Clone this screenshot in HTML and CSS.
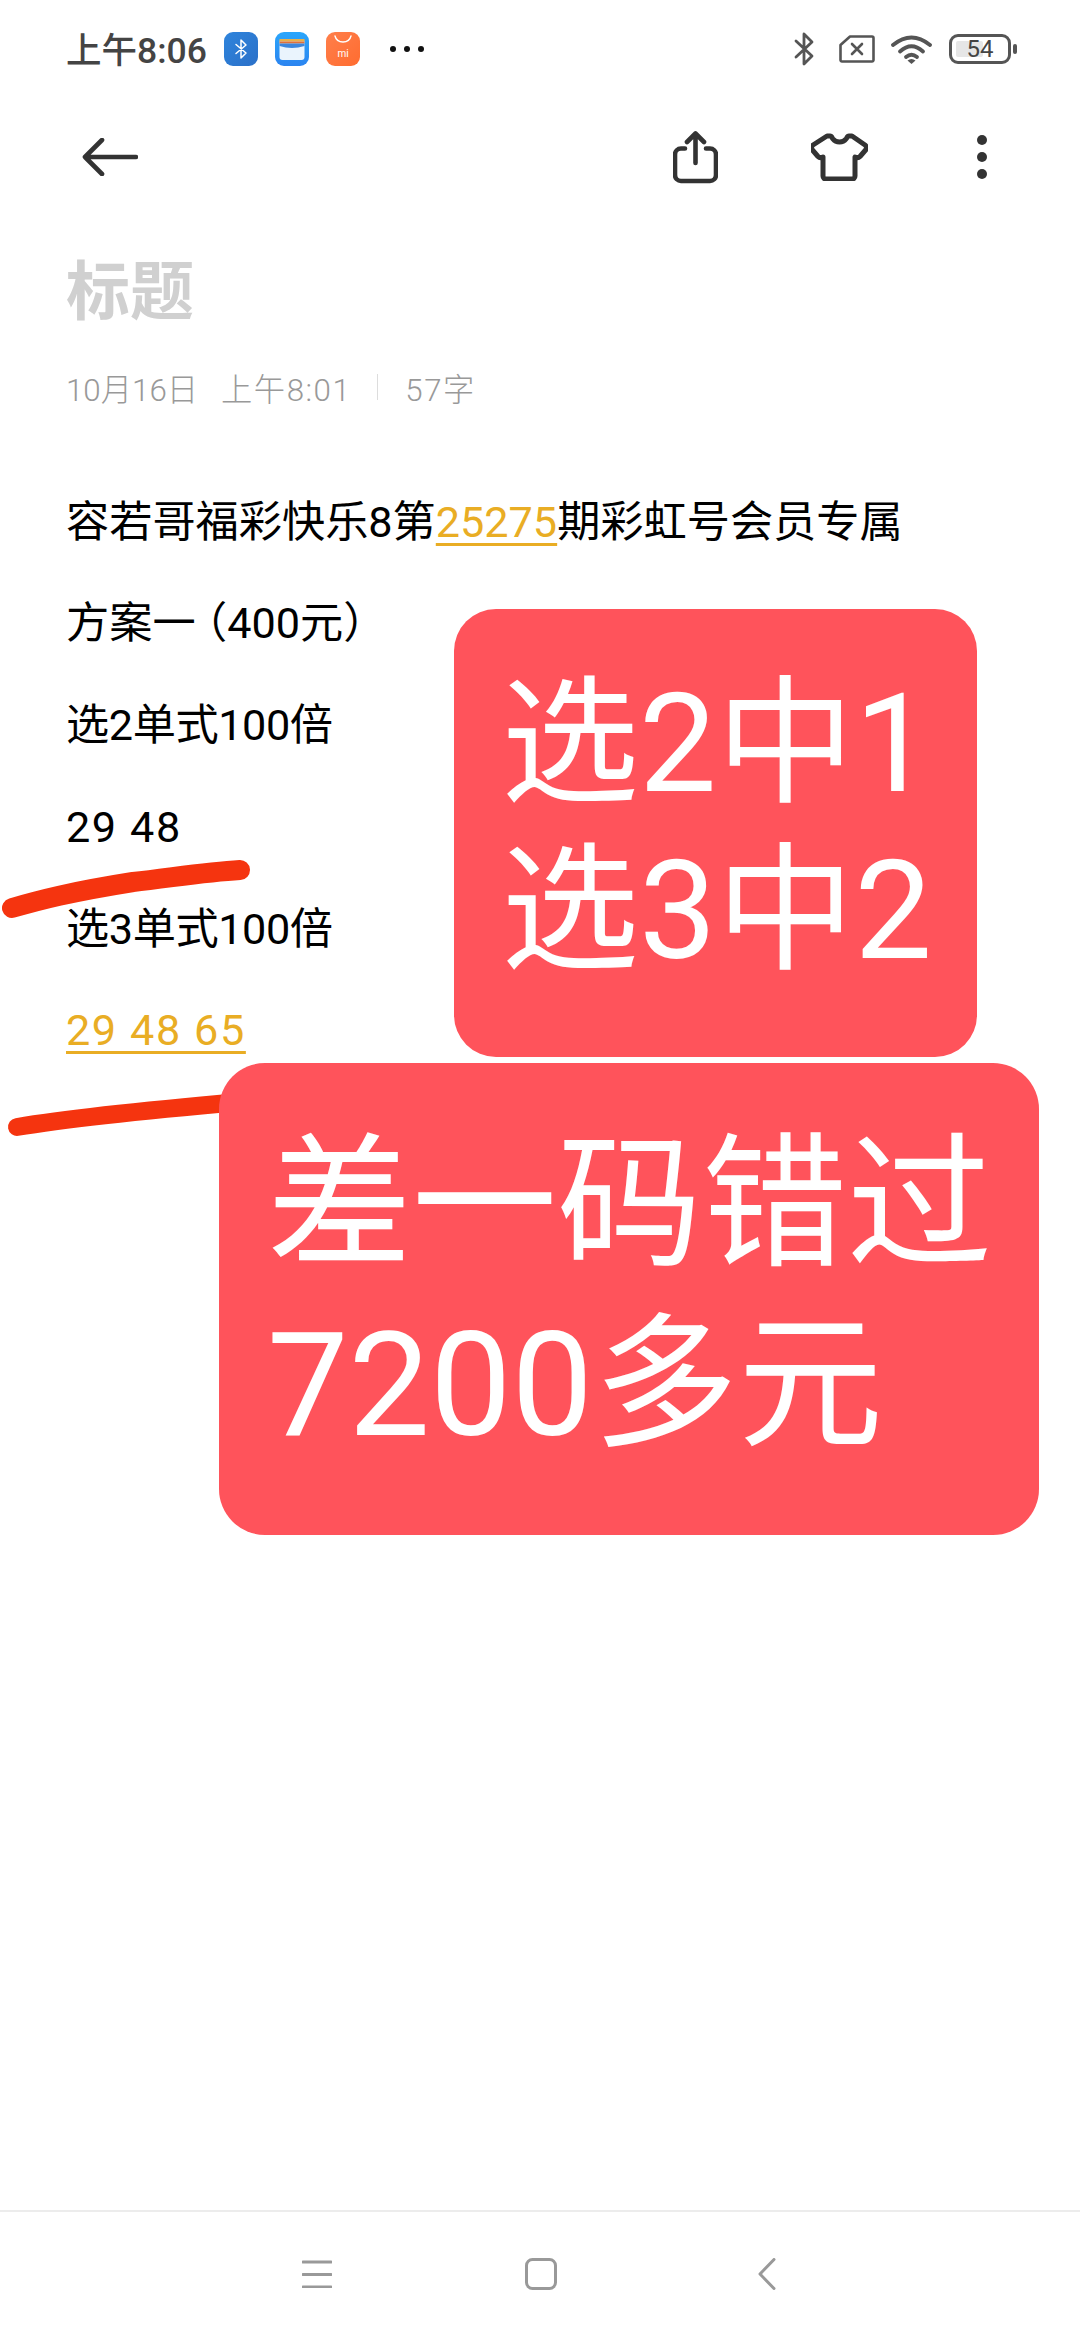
FILE: index.html
```html
<!DOCTYPE html>
<html lang="zh-CN">
<head>
    <meta charset="UTF-8">
    <meta name="viewport" content="width=device-width, initial-scale=1.0">
    <title>标题</title>
    <link rel="stylesheet" href="styles.css">
</head>

<body>
<div class="page">
    <!-- status bar -->
    <div class="status-bar">
        <span class="clock">上午8:06</span>
        <div class="app-icons">
            <svg class="app-icon" viewBox="0 0 34 34">
                <defs>
                    <linearGradient id="bt-bg" x1="0" y1="0" x2="1" y2="1"><stop offset="0" stop-color="#2e84dc"/><stop offset="1" stop-color="#2b70c8"/></linearGradient>
                    <linearGradient id="wallet-bg" x1="0" y1="0" x2="0" y2="1"><stop offset="0" stop-color="#2aa6fb"/><stop offset="1" stop-color="#2b84f0"/></linearGradient>
                    <linearGradient id="shop-bg" x1="0" y1="0" x2="1" y2="1"><stop offset="0" stop-color="#ff7f4b"/><stop offset="1" stop-color="#ff6c30"/></linearGradient>
                </defs>
                <rect width="34" height="34" rx="9" fill="url(#bt-bg)"/>
                <path d="M12 12.5 L22 21 L17 26 V8 L22 13 L12 21.5" fill="none" stroke="#fff" stroke-width="1.5" stroke-linecap="round" stroke-linejoin="round"/>
            </svg>
            <svg class="app-icon" viewBox="0 0 34 34">
                <rect width="34" height="34" rx="9" fill="url(#wallet-bg)"/>
                <rect x="4.5" y="7" width="25" height="21" rx="3" fill="#eaf4fd"/>
                <rect x="4.5" y="7" width="25" height="2.5" fill="#e8b04a"/>
                <rect x="4.5" y="9.5" width="25" height="2" fill="#e0703a"/>
                <path d="M4.5 11.5 H29.5 V14 Q17 18 4.5 14 Z" fill="#3c86dc"/>
            </svg>
            <svg class="app-icon" viewBox="0 0 34 34">
                <rect width="34" height="34" rx="9" fill="url(#shop-bg)"/>
                <path d="M9 4 C11 12 23 12 25 4" fill="none" stroke="#fff" stroke-width="1.4" stroke-linecap="round"/>
                <text class="mi-mark" x="17" y="24.5" text-anchor="middle">mi</text>
            </svg>
        </div>
        <div class="more-dots"><i></i><i></i><i></i></div>

        <div class="status-right">
            <svg class="st-bt" viewBox="0 0 20 34">
                <path d="M2 9 L18 24 L10 32 V2 L18 10 L2 25" fill="none" stroke="#555" stroke-width="2.8" stroke-linecap="round" stroke-linejoin="round"/>
            </svg>
            <svg class="st-sim" viewBox="0 0 36 28">
                <path d="M11 1.5 H33 a1.5 1.5 0 0 1 1.5 1.5 V25 a1.5 1.5 0 0 1 -1.5 1.5 H3 a1.5 1.5 0 0 1 -1.5 -1.5 V10 Z" fill="none" stroke="#555" stroke-width="2.6" stroke-linejoin="round"/>
                <path d="M13 9 L23 19 M23 9 L13 19" stroke="#555" stroke-width="2.6" stroke-linecap="round"/>
            </svg>
            <svg class="st-wifi" viewBox="0 0 41 29">
                <g fill="none" stroke="#555" stroke-width="3.8" stroke-linecap="round">
                    <path d="M2 10 Q20.5 -5 39 10"/>
                    <path d="M9 16.5 Q20.5 6 32 16.5"/>
                    <path d="M15 22 Q20.5 17.5 26 22"/>
                </g>
                <path d="M20.5 29 L16.5 25.5 Q20.5 22.5 24.5 25.5 Z" fill="#555"/>
            </svg>
            <div class="battery">
                <div class="battery-fill"></div>
                <span class="battery-num">54</span>
            </div>
            <div class="battery-nub"></div>
        </div>
    </div>

    <!-- top toolbar -->
    <div class="toolbar">
        <svg class="tb-back" viewBox="0 0 56 38">
            <path d="M54 19 H3 M20 2 L3 19 L20 36" fill="none" stroke="#333" stroke-width="4.6" stroke-linecap="round" stroke-linejoin="round"/>
        </svg>
        <div class="toolbar-right">
            <svg class="tb-share" viewBox="0 0 45 53">
                <path d="M12 17.5 H8 a6 6 0 0 0 -6 6 V44 a6 6 0 0 0 6 6 H37 a6 6 0 0 0 6 -6 V23.5 a6 6 0 0 0 -6 -6 H33" fill="none" stroke="#333" stroke-width="4.6" stroke-linecap="round"/>
                <path d="M22.5 32 V3 M14 11 L22.5 2.5 L31 11" fill="none" stroke="#333" stroke-width="4.6" stroke-linecap="round" stroke-linejoin="round"/>
            </svg>
            <svg class="tb-shirt" viewBox="0 0 57 48">
                <path d="M16 3 h3 c2 0 2 2 3 3 c3 4 10 4 13 0 c1 -1 1 -3 3 -3 h3 l13 9 c2 1.5 2 3 1 4.5 l-6 7 c-2 2 -4 1 -5 .5 V43 a3 3 0 0 1 -3 3 H15 a3 3 0 0 1 -3 -3 V24 c-1 .5 -3 1.5 -5 -.5 l-6 -7 c-1 -1.5 -1 -3 1 -4.5 z" fill="none" stroke="#333" stroke-width="5" stroke-linejoin="round"/>
            </svg>
            <div class="tb-menu"><i></i><i></i><i></i></div>
        </div>
    </div>

    <!-- note -->
    <div class="note">
        <h1 class="note-title">标题</h1>
        <div class="note-meta">
            <span>10月16日</span>
            <span class="meta-time">上午8:01</span>
            <span class="meta-sep"></span>
            <span class="meta-count">57字</span>
        </div>
        <div class="note-body">
            <p>容若哥福彩快乐8第<a class="hit">25275</a>期彩虹号会员专属</p>
            <p>方案一<span class="paren paren-open">（</span>400元<span class="paren">）</span></p>
            <p class="tight">选2单式100倍</p>
            <p class="nums">29 48</p>
            <p class="tight">选3单式100倍</p>
            <p class="nums"><a class="hit">29 48 65</a></p>
        </div>
    </div>

    <!-- hand drawn marks and stickers on top of the note -->
    <svg class="marks" viewBox="0 0 260 360">
        <path d="M12 128 C40 120 70 112 133 102 C170 98 205 92 240 90" fill="none" stroke="#f5340f" stroke-width="20" stroke-linecap="round"/>
        <path d="M17 347 C70 338 150 330 240 322" fill="none" stroke="#f5340f" stroke-width="18" stroke-linecap="round"/>
    </svg>
    <div class="callout callout-a">选2中1<br>选3中2</div>
    <div class="callout callout-b">差一码错过<br>7200多元</div>

    <!-- nav bar -->
    <div class="nav-bar">
        <svg class="nav-menu" viewBox="0 0 30 28">
            <path d="M1 2 H29 M1 14.5 H29 M1 27 H29" stroke="#999" stroke-width="3" stroke-linecap="round"/>
        </svg>
        <svg class="nav-home" viewBox="0 0 32 32">
            <rect x="1.5" y="1.5" width="29" height="29" rx="6" fill="none" stroke="#999" stroke-width="3"/>
        </svg>
        <svg class="nav-back" viewBox="0 0 18 32">
            <path d="M16 1.5 L2 16 L16 30.5" fill="none" stroke="#999" stroke-width="3" stroke-linecap="round" stroke-linejoin="round"/>
        </svg>
    </div>
</div>
</body>
</html>
```

FILE: styles.css
```css
* {
    box-sizing: border-box;
}
html, body {
    margin: 0;
    padding: 0;
}
body {
    background-color: #fff;
    font-family: Roboto, "Noto Sans CJK SC", sans-serif;
    color: #000;
}
.page {
    position: relative;
    width: 1080px;
    height: 2340px;
    display: flex;
    flex-direction: column;
    overflow: hidden;
}

/* status bar */
.status-bar {
    height: 98px;
    padding: 0 63px 0 66px;
    display: flex;
    align-items: center;
}
.clock {
    font-size: 35.5px;
    font-weight: 500;
    color: #444;
    margin-top: -3px;
}
.app-icons {
    display: flex;
    gap: 17px;
    margin-left: 17px;
}
.app-icon {
    width: 34px;
    height: 34px;
    display: block;
}
.mi-mark {
    font-family: Roboto, sans-serif;
    font-size: 10px;
    fill: #fff;
}
.more-dots {
    display: flex;
    gap: 8px;
    margin-left: 30px;
}
.more-dots i {
    width: 6px;
    height: 6px;
    border-radius: 50%;
    background-color: #111;
}
.status-right {
    margin-left: auto;
    display: flex;
    align-items: center;
}
.st-bt {
    width: 20px;
    height: 34px;
}
.st-sim {
    width: 36px;
    height: 28px;
    margin-left: 25px;
}
.st-wifi {
    width: 41px;
    height: 29px;
    margin-left: 16px;
}
.battery {
    position: relative;
    width: 62px;
    height: 30px;
    margin-left: 17px;
    border: 3px solid #555;
    border-radius: 9px;
    display: flex;
    align-items: center;
    justify-content: center;
}
.battery-fill {
    position: absolute;
    left: 4px;
    top: 4px;
    bottom: 4px;
    width: 27px;
    background-color: #e6e6e6;
    border-radius: 2px;
}
.battery-num {
    position: relative;
    font-size: 24px;
    line-height: 24px;
    color: #444;
}
.battery-nub {
    width: 4px;
    height: 10px;
    margin-left: 2px;
    background-color: #555;
    border-radius: 2px;
}

/* toolbar */
.toolbar {
    height: 118px;
    padding: 0 93px 0 82px;
    display: flex;
    align-items: center;
    justify-content: space-between;
}
.tb-back {
    width: 56px;
    height: 38px;
}
.toolbar-right {
    display: flex;
    align-items: center;
}
.tb-share {
    width: 45px;
    height: 53px;
}
.tb-shirt {
    width: 57px;
    height: 48px;
    margin-left: 93px;
}
.tb-menu {
    margin-left: 109px;
    display: flex;
    flex-direction: column;
    gap: 7px;
}
.tb-menu i {
    width: 10px;
    height: 10px;
    border-radius: 50%;
    background-color: #333;
}

/* note */
.note {
    padding: 0 66px;
}
.note-title {
    margin: 32px 0 0;
    font-size: 64px;
    line-height: 90px;
    font-weight: 700;
    color: #d0d0d0;
}
.note-meta {
    margin-top: 29px;
    height: 40px;
    display: flex;
    align-items: center;
    font-size: 31.3px;
    font-weight: 300;
    color: #999;
}
.meta-time {
    margin-left: 23px;
    letter-spacing: 1.5px;
}
.meta-sep {
    width: 1px;
    height: 26px;
    margin: 0 27px 0 26px;
    background-color: #ddd;
}
.meta-count {
    letter-spacing: 1.5px;
}
.note-body {
    margin-top: 64.5px;
}
.note-body p {
    margin: 0;
    font-size: 43.2px;
    line-height: 101.8px;
    white-space: nowrap;
}
.note-body .nums {
    letter-spacing: 1.6px;
}
.note-body .tight {
    letter-spacing: -.4px;
}
.paren {
    font-feature-settings: "halt";
}
.paren-open {
    margin-left: 10px;
}
.hit {
    color: #e9ad24;
    text-decoration: underline;
    text-decoration-thickness: 3px;
    text-underline-offset: 6px;
}

/* marks and stickers */
.marks {
    position: absolute;
    left: 0;
    top: 780px;
    width: 260px;
    height: 360px;
}
.callout {
    position: absolute;
    background-color: #ff535b;
    color: #fff;
    border-radius: 42px;
    white-space: nowrap;
}
.callout-a {
    left: 454px;
    top: 609px;
    width: 523px;
    height: 448px;
    padding: 52px 0 0 47px;
    font-size: 138px;
    line-height: 167px;
}
.callout-b {
    left: 219px;
    top: 1063px;
    width: 820px;
    height: 472px;
    padding: 52px 0 0 48px;
    border-radius: 46px;
    font-size: 145px;
    line-height: 180px;
}

/* nav bar */
.nav-bar {
    margin-top: auto;
    height: 130px;
    border-top: 2px solid #ececec;
    display: flex;
    align-items: center;
    padding: 0 0 4px 302px;
}
.nav-menu {
    width: 30px;
    height: 28px;
}
.nav-home {
    width: 32px;
    height: 32px;
    margin-left: 193px;
}
.nav-back {
    width: 18px;
    height: 32px;
    margin-left: 201px;
}
```
